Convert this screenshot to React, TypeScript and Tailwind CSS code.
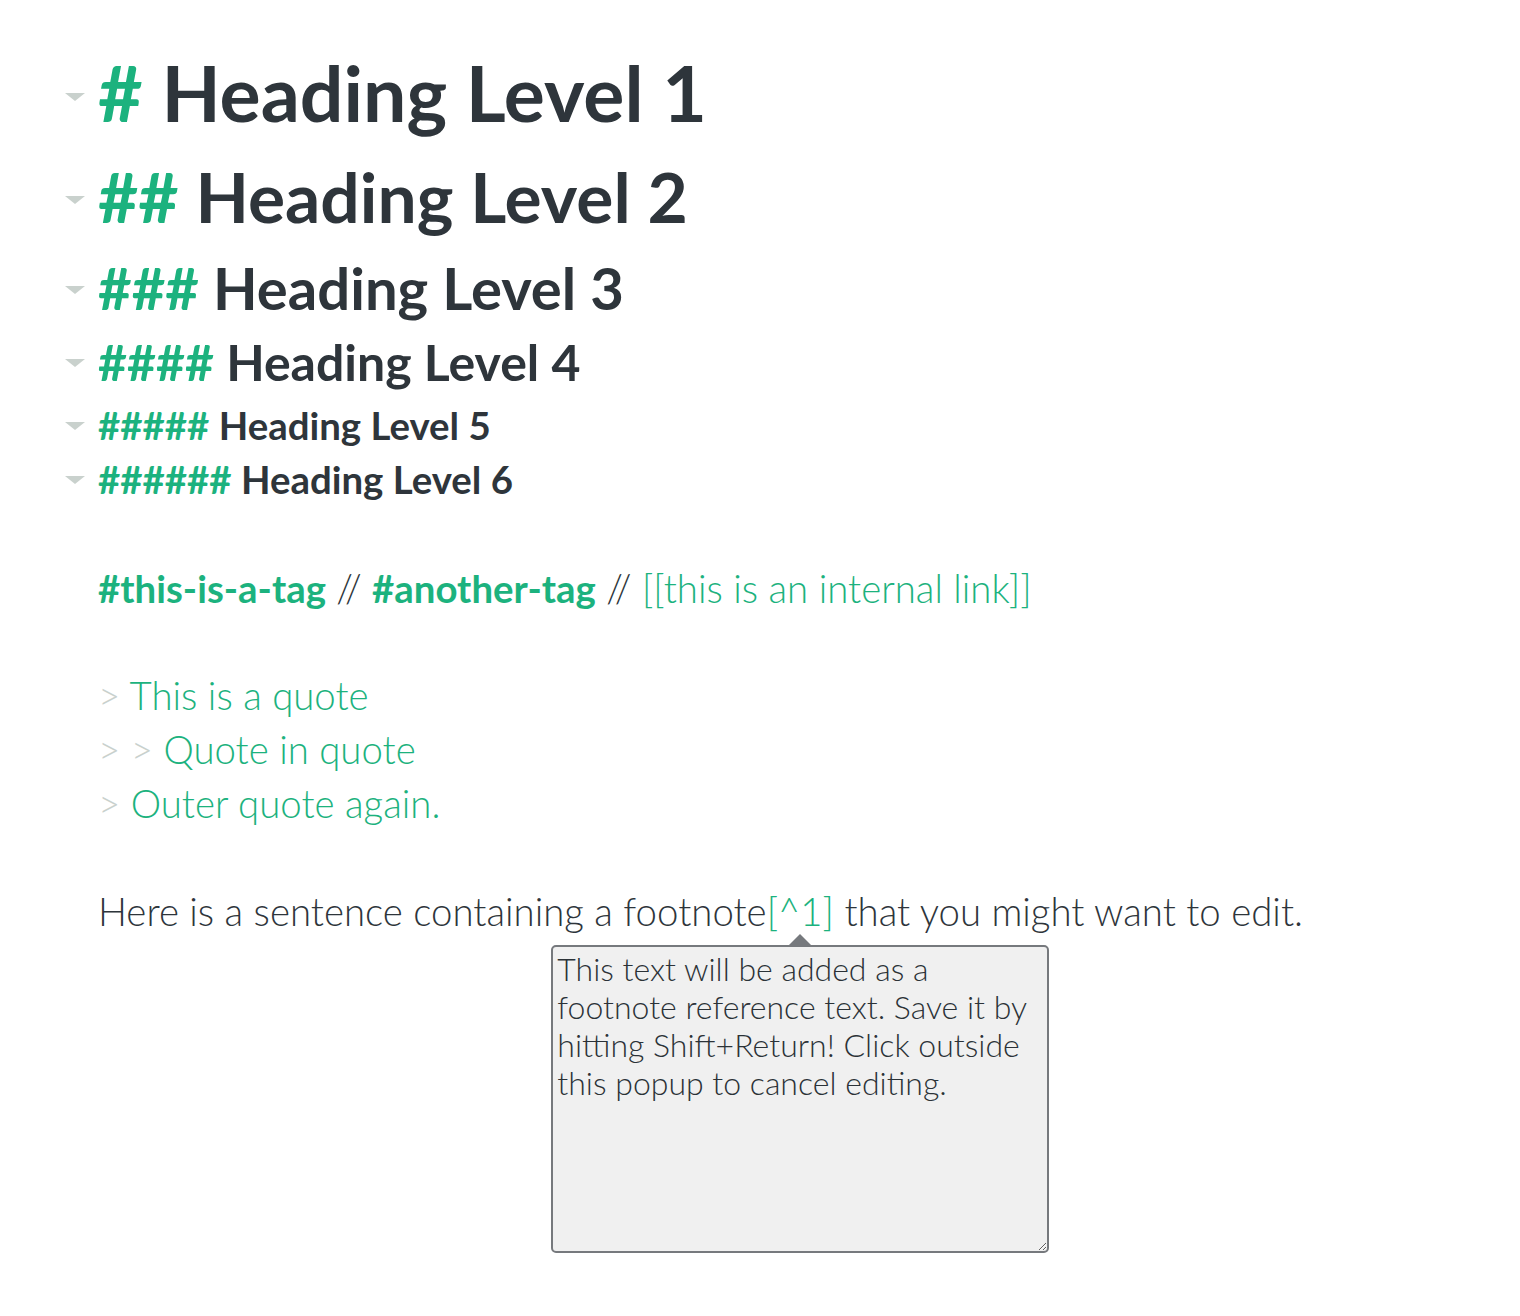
import React from 'react';

const GREEN = 'text-[#1cb27e]';

function Fold({ offset }: { offset: string }) {
  return (
    <div className={`w-[33px] shrink-0 flex ${offset}`}>
      <span className="block w-0 h-0 border-l-[10px] border-r-[10px] border-t-[8px] border-l-transparent border-r-transparent border-t-[#c9d1cd]" />
    </div>
  );
}

function Heading({
  marks,
  text,
  size,
  gap,
  offset,
}: {
  marks: string;
  text: string;
  size: string;
  gap: string;
  offset: string;
}) {
  return (
    <div className={`flex items-center ${gap}`}>
      <Fold offset={offset} />
      <h1 className={`font-bold leading-[1.2] text-[#2e353b] ${size}`}>
        <span className={GREEN}>{marks}</span> {text}
      </h1>
    </div>
  );
}

export default function App() {
  return (
    <div
      className="min-h-[1316px] bg-white pl-[65px] pt-[46px] text-[#2e353b]"
      style={{ fontFamily: 'Lato, "Open Sans", sans-serif' }}
    >
      <Heading marks="#" text="Heading Level 1" size="text-[77px]" gap="" offset="mt-[10px]" />
      <Heading marks="##" text="Heading Level 2" size="text-[69.5px]" gap="mt-[17px]" offset="mt-[6px]" />
      <Heading marks="###" text="Heading Level 3" size="text-[58px]" gap="mt-[14px]" offset="mt-[4px]" />
      <Heading marks="####" text="Heading Level 4" size="text-[50px]" gap="mt-[10px]" offset="mt-[2px]" />
      <Heading marks="#####" text="Heading Level 5" size="text-[38.4px]" gap="mt-[9.5px]" offset="mt-[2px]" />
      <Heading marks="######" text="Heading Level 6" size="text-[38.4px]" gap="mt-[8px]" offset="mt-[2px]" />

      <div className="pl-[33px] text-[38.4px] leading-[54px] font-light">
        <p className="mt-[59px]">
          <span className={`font-bold ${GREEN}`}>#this-is-a-tag</span> //{' '}
          <span className={`font-bold ${GREEN}`}>#another-tag</span> //{' '}
          <span className={GREEN}>[[this is an internal link]]</span>
        </p>

        <div className="mt-[53px]">
          <p>
            <span className="text-[#c9d1cd]">&gt; </span>
            <span className={GREEN}>This is a quote</span>
          </p>
          <p>
            <span className="text-[#c9d1cd]">&gt; &gt; </span>
            <span className={GREEN}>Quote in quote</span>
          </p>
          <p>
            <span className="text-[#c9d1cd]">&gt; </span>
            <span className={GREEN}>Outer quote again.</span>
          </p>
        </div>

        <p className="mt-[54px]">
          Here is a sentence containing a footnote
          <span className={`relative ${GREEN}`}>
            [^1]
            <span className="absolute left-1/2 top-full z-10 -translate-x-1/2 pt-[11px]">
              <span className="absolute left-1/2 top-0 -translate-x-1/2 w-0 h-0 border-l-[11px] border-r-[11px] border-b-[11px] border-l-transparent border-r-transparent border-b-[#76797d]" />
              <textarea
                readOnly
                className="block w-[498px] h-[308px] rounded-[5px] border-2 border-[#76797d] bg-[#f0f0f0] px-[4px] py-[3px] text-[32px] leading-[38px] font-light text-[#2b3237] outline-none"
                style={{ fontFamily: 'Lato, "Open Sans", sans-serif' }}
                defaultValue="This text will be added as a footnote reference text. Save it by hitting Shift+Return! Click outside this popup to cancel editing."
              />
            </span>
          </span>{' '}
          that you might want to edit.
        </p>
      </div>
    </div>
  );
}
